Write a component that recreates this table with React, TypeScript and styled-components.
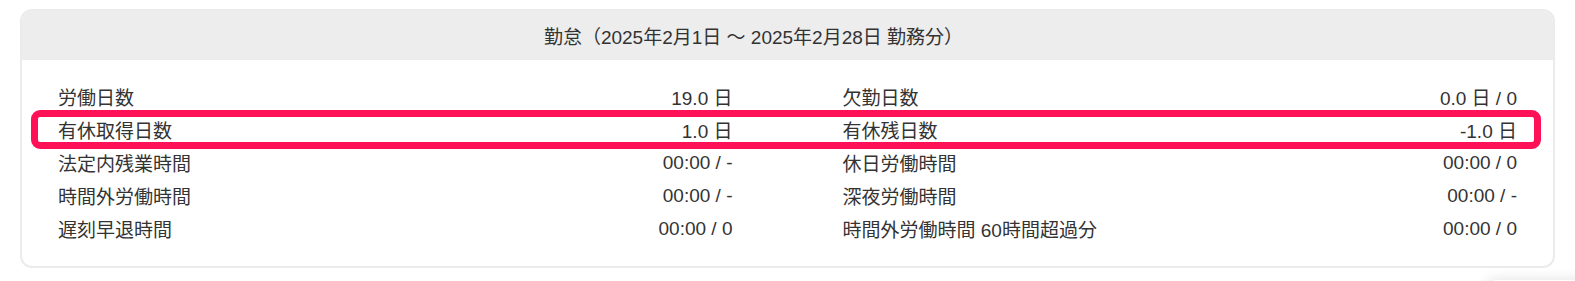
import styled, { createGlobalStyle } from "styled-components";

const GlobalStyle = createGlobalStyle`
  body {
    margin: 0;
    background: #ffffff;
    font-family: "Liberation Sans", "Noto Sans CJK JP", sans-serif;
    color: #333333;
  }
`;

type Item = { label: string; value: string };

const rows: { left: Item; right: Item; marked?: boolean }[] = [
  { left: { label: "労働日数", value: "19.0 日" }, right: { label: "欠勤日数", value: "0.0 日 / 0" } },
  { left: { label: "有休取得日数", value: "1.0 日" }, right: { label: "有休残日数", value: "-1.0 日" }, marked: true },
  { left: { label: "法定内残業時間", value: "00:00 / -" }, right: { label: "休日労働時間", value: "00:00 / 0" } },
  { left: { label: "時間外労働時間", value: "00:00 / -" }, right: { label: "深夜労働時間", value: "00:00 / -" } },
  { left: { label: "遅刻早退時間", value: "00:00 / 0" }, right: { label: "時間外労働時間 60時間超過分", value: "00:00 / 0" } },
];

const App = () => {
  return (
    <Page>
      <GlobalStyle />
      <Card>
        <Header>勤怠（2025年2月1日 ～ 2025年2月28日 勤務分）</Header>
        <Body>
          {rows.map((row, i) => (
            <Row key={i}>
              {row.marked && <Marker />}
              <Pair>
                <Label>{row.left.label}</Label>
                <Value>{row.left.value}</Value>
              </Pair>
              <Pair>
                <Label>{row.right.label}</Label>
                <Value>{row.right.value}</Value>
              </Pair>
            </Row>
          ))}
        </Body>
      </Card>
      <FloatShadow />
    </Page>
  );
};

const Page = styled.div`
  padding: 9px 20px;
  height: 263px;
  overflow: hidden;
  position: relative;
`;

const Card = styled.section`
  border: 2px solid #ebebeb;
  border-radius: 12px;
  overflow: hidden;
  background: #ffffff;
`;

const Header = styled.div`
  height: 49px;
  display: flex;
  align-items: center;
  justify-content: center;
  padding-right: 68px;
  background: #ededed;
  font-size: 19px;
  color: #333333;
`;

const Body = styled.div`
  padding: 20px 36px 21px;
`;

const Row = styled.div`
  position: relative;
  display: grid;
  grid-template-columns: 1fr 1fr;
  column-gap: 110px;
  height: 33px;
  align-items: center;
`;

const Marker = styled.div`
  position: absolute;
  left: -27px;
  right: -24px;
  top: -3px;
  bottom: -3px;
  border: 7px solid #ff1158;
  border-radius: 9px;
  pointer-events: none;
`;

const Pair = styled.div`
  display: flex;
  justify-content: space-between;
  align-items: center;
  font-size: 19px;
`;

const Label = styled.span`
  white-space: nowrap;
`;

const Value = styled.span`
  white-space: nowrap;
`;

const FloatShadow = styled.div`
  position: absolute;
  right: -20px;
  top: 280px;
  width: 110px;
  height: 60px;
  border-radius: 12px;
  background: #ffffff;
  box-shadow: 0 0 14px rgba(0, 0, 0, 0.12);
`;

export default App;
